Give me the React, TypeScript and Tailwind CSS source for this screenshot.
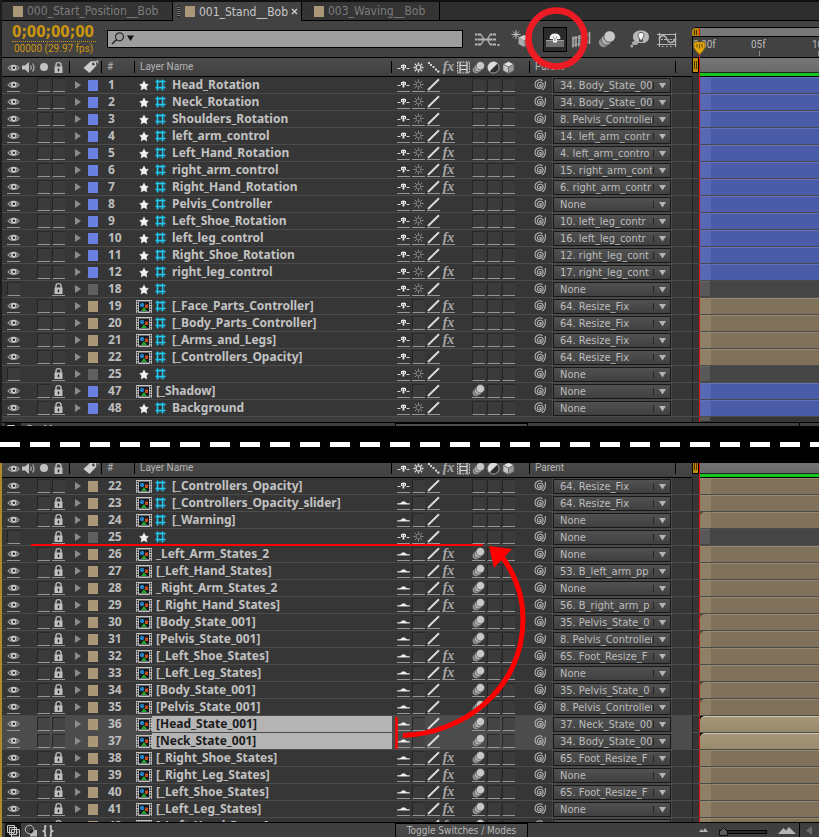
import { ReactNode } from 'react'
import clsx from 'clsx'

type Layer = {
  id: number
  name: string
  color: 'blue' | 'tan' | 'gray'
  comp?: boolean
  guide?: boolean
  hidden?: boolean
  locked?: boolean
  shy?: boolean
  fx?: boolean
  blur?: boolean
  selected?: boolean
  trimmed?: boolean
  parent: string
}

const blue = { color: 'blue' as const, guide: true }
const ctrl = { color: 'tan' as const, comp: true, guide: true }
const state = { color: 'tan' as const, comp: true, locked: true, shy: true, blur: true }

const topLayers: Layer[] = [
  { ...blue, id: 1, name: 'Head_Rotation', parent: '34. Body_State_001' },
  { ...blue, id: 2, name: 'Neck_Rotation', parent: '34. Body_State_001' },
  { ...blue, id: 3, name: 'Shoulders_Rotation', parent: '8. Pelvis_Controller' },
  { ...blue, id: 4, name: 'left_arm_control', fx: true, parent: '14. left_arm_contr' },
  { ...blue, id: 5, name: 'Left_Hand_Rotation', fx: true, parent: '4. left_arm_contro' },
  { ...blue, id: 6, name: 'right_arm_control', fx: true, parent: '15. right_arm_cont' },
  { ...blue, id: 7, name: 'Right_Hand_Rotation', fx: true, parent: '6. right_arm_contr' },
  { ...blue, id: 8, name: 'Pelvis_Controller', parent: 'None' },
  { ...blue, id: 9, name: 'Left_Shoe_Rotation', parent: '10. left_leg_contr' },
  { ...blue, id: 10, name: 'left_leg_control', fx: true, parent: '16. left_leg_contr' },
  { ...blue, id: 11, name: 'Right_Shoe_Rotation', parent: '12. right_leg_cont' },
  { ...blue, id: 12, name: 'right_leg_control', fx: true, parent: '17. right_leg_cont' },
  { id: 18, name: '', color: 'gray', guide: true, hidden: true, locked: true, parent: 'None' },
  { ...ctrl, id: 19, name: '[_Face_Parts_Controller]', fx: true, parent: '64. Resize_Fix' },
  { ...ctrl, id: 20, name: '[_Body_Parts_Controller]', fx: true, parent: '64. Resize_Fix' },
  { ...ctrl, id: 21, name: '[_Arms_and_Legs]', fx: true, parent: '64. Resize_Fix' },
  { ...ctrl, id: 22, name: '[_Controllers_Opacity]', parent: '64. Resize_Fix' },
  { id: 25, name: '', color: 'gray', guide: true, hidden: true, locked: true, parent: 'None' },
  { id: 47, name: '[_Shadow]', color: 'blue', comp: true, locked: true, blur: true, parent: 'None' },
  { ...blue, id: 48, name: 'Background', locked: true, parent: 'None' },
]

const bottomLayers: Layer[] = [
  { ...ctrl, id: 22, name: '[_Controllers_Opacity]', parent: '64. Resize_Fix' },
  { ...ctrl, id: 23, name: '[_Controllers_Opacity_slider]', locked: true, shy: true, parent: '64. Resize_Fix' },
  { ...ctrl, id: 24, name: '[_Warning]', locked: true, shy: true, trimmed: true, parent: 'None' },
  { id: 25, name: '', color: 'gray', guide: true, hidden: true, locked: true, parent: 'None' },
  { ...state, id: 26, name: '_Left_Arm_States_2', fx: true, parent: 'None' },
  { ...state, id: 27, name: '[_Left_Hand_States]', fx: true, parent: '53. B_left_arm_pp' },
  { ...state, id: 28, name: '_Right_Arm_States_2', fx: true, parent: 'None' },
  { ...state, id: 29, name: '[_Right_Hand_States]', fx: true, parent: '56. B_right_arm_p' },
  { ...state, id: 30, name: '[Body_State_001]', trimmed: true, parent: '35. Pelvis_State_0' },
  { ...state, id: 31, name: '[Pelvis_State_001]', trimmed: true, parent: '8. Pelvis_Controller' },
  { ...state, id: 32, name: '[_Left_Shoe_States]', fx: true, parent: '65. Foot_Resize_F' },
  { ...state, id: 33, name: '[_Left_Leg_States]', fx: true, parent: 'None' },
  { ...state, id: 34, name: '[Body_State_001]', trimmed: true, parent: '35. Pelvis_State_0' },
  { ...state, id: 35, name: '[Pelvis_State_001]', trimmed: true, parent: '8. Pelvis_Controller' },
  { ...state, id: 36, name: '[Head_State_001]', locked: false, selected: true, trimmed: true, parent: '37. Neck_State_00' },
  { ...state, id: 37, name: '[Neck_State_001]', locked: false, selected: true, trimmed: true, parent: '34. Body_State_001' },
  { ...state, id: 38, name: '[_Right_Shoe_States]', fx: true, parent: '65. Foot_Resize_F' },
  { ...state, id: 39, name: '[_Right_Leg_States]', fx: true, parent: 'None' },
  { ...state, id: 40, name: '[_Left_Shoe_States]', fx: true, parent: '65. Foot_Resize_F' },
  { ...state, id: 41, name: '[_Left_Leg_States]', fx: true, parent: 'None' },
]

const nextLayer: Layer = { ...state, id: 42, name: '[_Left_Hand_Poses]', fx: true, parent: 'None' }

const swatches = { blue: 'bg-[#6a80e0]', tan: 'bg-[#a99777]', gray: 'bg-[#606060]' }

/* ---------- icons ---------- */

const Eye = () => (
  <svg width="13" height="13" viewBox="0 0 13 13">
    <path d="M0.8 7C3 3.4 10 3.2 12.3 7C10 10.2 3 10.2 0.8 7Z" fill="#5c5c5c" stroke="#bcbcbc" strokeWidth="0.9" />
    <circle cx="6.7" cy="6.6" r="2.7" fill="#d6d6d6" />
    <circle cx="6.9" cy="6.8" r="1.3" fill="#2a2a2a" />
  </svg>
)

const Speaker = () => (
  <svg width="14" height="13" viewBox="0 0 14 13">
    <path d="M0 4.5H3L7 1V12L3 8.5H0Z" fill="#c2c2c2" />
    <path d="M8.5 4.5Q10 6.5 8.5 8.5M10.5 2.5Q13.5 6.5 10.5 10.5" fill="none" stroke="#b4b4b4" strokeWidth="1.2" />
  </svg>
)

const Lock = () => (
  <svg width="13" height="13" viewBox="0 0 13 13">
    <path d="M4 6V3.8C4 0.9 9 0.9 9 3.8V6" fill="none" stroke="#c0c0c0" strokeWidth="1.4" />
    <rect x="2.5" y="5.5" width="8" height="6.5" fill="#c0c0c0" />
    <path d="M6.5 7.5V10.3" stroke="#222" strokeWidth="1.4" />
  </svg>
)

const Tag = () => (
  <svg width="16" height="14" viewBox="0 0 16 14">
    <path d="M0.5 8L7.5 1.5L12.5 1L13.5 5.5L6.5 13Z" fill="#cdcdcd" />
    <circle cx="10.5" cy="4" r="1.4" fill="#333" />
    <path d="M10.8 3.8L14.8 0.5V3.5" fill="none" stroke="#cdcdcd" />
  </svg>
)

const Star = () => (
  <svg width="16" height="13" viewBox="0 0 16 13">
    <path d="M8 0.8L9.9 4.6L13.4 5L10.9 7.8L11.6 12L8 10L4.4 12L5.1 7.8L2.6 5L6.1 4.6Z" fill="#f2f2f2" stroke="#1d1d1d" strokeWidth="0.6" />
  </svg>
)

const CompIcon = () => (
  <svg width="16" height="13" viewBox="0 0 16 13">
    <rect width="16" height="13" fill="#c4c4c4" />
    <rect x="3" y="1.5" width="10" height="10" fill="#141820" />
    <path d="M1.5 1V13M14.5 1V13" stroke="#1c1c1c" strokeWidth="1.4" strokeDasharray="1.4 1.2" />
    <circle cx="6" cy="5" r="2.2" fill="#2384c4" />
    <rect x="9" y="4.5" width="3" height="3.5" fill="#d04a18" />
    <path d="M5 11L8 7L11 11Z" fill="#22a52c" />
  </svg>
)

const GuideIcon = () => (
  <svg width="11" height="12" viewBox="0 0 11 12">
    <rect x="1" y="1" width="9" height="10" fill="#2f5662" />
    <rect x="4" y="4" width="3" height="4" fill="#333" />
    <path d="M2.5 0.5V11.5M7.5 0.5V11.5M0.5 2.5H10.5M0.5 8.500H10.5" stroke="#22c8ee" strokeWidth="1.3" />
  </svg>
)

const ShyUp = () => (
  <svg width="13" height="13" viewBox="0 0 13 13">
    <path d="M0.5 7.5H3.5M9.5 7.5H12.5" stroke="#dadada" strokeWidth="1.2" />
    <path d="M4 4.3Q6.5 2.8 9 4.3V7H7.4V9.5H5.6V7H4Z" fill="#ececec" />
    <path d="M5.5 5.3V6.3M7.5 5.3V6.3" stroke="#222" strokeWidth="0.9" />
  </svg>
)

const ShyDown = () => (
  <svg width="13" height="13" viewBox="0 0 13 13">
    <path d="M0.5 7.5H12.5V8.2H0.5ZM3.2 7.5Q6.5 3.6 9.8 7.5Z" fill="#f0f0f0" stroke="#f0f0f0" strokeWidth="0.4" />
  </svg>
)

const Sun = ({ bright }: { bright?: boolean }) => (
  <svg width="13" height="13" viewBox="0 0 13 13" fill="none" stroke={bright ? '#dcdcdc' : '#8e8e8e'} strokeWidth={bright ? 1.3 : 1}>
    <rect x="4.2" y="4.2" width="4.6" height="4.6" rx="1.5" />
    <path d="M6.5 1.5V3.5M6.5 9.5V11.5M1.5 6.5H3.5M9.5 6.5H11.5M2.8 2.8L4 4M9 9L10.2 10.2M10.2 2.8L9 4M4 9L2.8 10.2" />
  </svg>
)

const Slash = () => (
  <svg width="13" height="13" viewBox="0 0 13 13">
    <path d="M1 12L12 1.2" stroke="#dcdcdc" strokeWidth="1.9" />
  </svg>
)

const Steps = () => (
  <svg width="13" height="13" viewBox="0 0 13 13" fill="#d4d4d4">
    <path d="M1 1H3V3H1ZM3 3H5V5H3ZM5.500 5H7.500V7H5.500ZM8 7.500H10V9.500H8ZM10 9.500H12.500V11.500H10Z" />
  </svg>
)

const Fx = () => <span className="font-['Liberation_Serif',serif] text-[14px] leading-[12px] font-bold text-[#a8a8a8] italic">fx</span>

const Film = () => (
  <svg width="13" height="13" viewBox="0 0 13 13">
    <path d="M0.5 1H12.5V12H0.5Z" fill="#555" stroke="#d0d0d0" strokeDasharray="1.6 1" />
    <path d="M3 1V12M10 1V12M3 4.5H10M3 8.5H10" stroke="#d8d8d8" strokeWidth="1.2" />
  </svg>
)

const Blur = ({ size = 13 }: { size?: number }) => (
  <svg width={size} height={size} viewBox="0 0 13 13" stroke="#3d3d3d" strokeWidth="0.6">
    <circle cx="4.2" cy="8.8" r="3.8" fill="#9a9a9a" />
    <circle cx="6.2" cy="7" r="4" fill="#aeaeae" />
    <circle cx="8.4" cy="4.7" r="4.2" fill="#c8c8c8" />
  </svg>
)

const Adjust = () => (
  <svg width="13" height="13" viewBox="0 0 13 13">
    <circle cx="6.5" cy="6.5" r="5.6" fill="#2c2c2c" stroke="#a8a8a8" />
    <path d="M2.5 10.500A5.600 5.600 0 0 1 10.500 2.500Z" fill="#dcdcdc" />
  </svg>
)

const Cube = () => (
  <svg width="13" height="13" viewBox="0 0 13 13" stroke="#5a5a5a" strokeWidth="0.6">
    <path d="M6.5 0.5L12 3.2L6.5 6L1 3.2Z" fill="#e2e2e2" />
    <path d="M1 3.2L6.5 6V12.5L1 9.6Z" fill="#c4c4c4" />
    <path d="M12 3.2L6.5 6V12.5L12 9.6Z" fill="#989898" />
  </svg>
)

const Swirl = () => (
  <svg width="13" height="13" viewBox="0 0 13 13" fill="none" stroke="#b2b2b2" strokeWidth="1.100">
    <path d="M5.500 6.500A0.900 0.900 0 0 1 7.300 6.500A2 2 0 0 1 3.400 6.300A2.900 2.900 0 0 1 9.200 6A4.100 4.100 0 0 1 1.100 6.200A4.600 4.600 0 0 1 8.500 1.800" />
    <path d="M11.300 2V6Q11 9.500 8 10.800" />
  </svg>
)

/* ---------- timeline rows ---------- */

function Cell({ label, children, boxed = true }: { label: string; children?: ReactNode; boxed?: boolean }) {
  return (
    <button
      aria-label={label}
      className={clsx(
        'mx-px flex h-[14px] w-[13px] shrink-0 items-center justify-center overflow-hidden',
        boxed && 'border-b border-[#969696]',
        boxed && !children && 'border-t border-l border-t-[#2a2a2a] border-l-[#242424] bg-[#404040]/60'
      )}
    >
      {children}
    </button>
  )
}

function ParentSelect({ layer }: { layer: Layer }) {
  return (
    <div className="relative ml-[5px] h-[15px] w-[118px] shrink-0">
      <select
        aria-label={`Parent of layer ${layer.id}`}
        className="block h-[15px] w-full appearance-none overflow-hidden border border-[#181818] bg-gradient-to-b from-[#515151] to-[#404040] pr-[18px] pl-[6px] text-[11px] leading-[13px] text-[#bdbdbd] outline outline-[#494949]"
      >
        <option>{layer.parent}</option>
      </select>
      <svg className="pointer-events-none absolute top-[3px] right-[4px]" width="14" height="9" viewBox="0 0 14 9">
        <path d="M0.5 1V8" stroke="#242424" />
        <path d="M6 2H13L9.5 7.5Z" fill="#b4b4b4" />
      </svg>
    </div>
  )
}

function Bar({ layer }: { layer: Layer }) {
  if (layer.color === 'gray') {
    return (
      <div className="h-[16px] flex-1 bg-[#464646]">
        <div className="h-[15px] w-[10px] border-t border-[#666] bg-[#585858]" />
      </div>
    )
  }
  if (layer.selected) {
    return (
      <div className="h-[16px] flex-1 bg-black">
        <div className="h-[16px] rounded-tl-[5px] border-t border-[#d2c5ad] bg-gradient-to-b from-[#a5967a] to-[#998a6c]" />
      </div>
    )
  }
  return (
    <div className="h-[16px] flex-1 bg-[#4d473b]">
      <div
        className={clsx(
          'h-[16px] overflow-hidden border-t',
          layer.trimmed && 'rounded-tl-[5px]',
          layer.color === 'blue' ? 'border-[#6572b8] bg-[#4a5ba7]' : 'border-[#998a6e] bg-[#80725a]'
        )}
      >
        <div className={clsx('h-full w-[11px]', layer.color === 'blue' ? 'bg-[#5768b4]' : 'bg-[#8f7f66]')} />
      </div>
    </div>
  )
}

/* strip between the layer columns and the track, ends in the playhead line */
const Gutter = () => <div className="w-[8px] shrink-0 self-stretch border-r border-l border-r-[#e01010] border-l-[#202020] bg-[#363636]" />

function LayerRow({ layer }: { layer: Layer }) {
  return (
    <div className="flex h-[17px] items-start border-b border-[#4b4b4b]">
      <div className={clsx('flex h-[16px] w-[690px] shrink-0 items-center pl-1', layer.selected ? 'bg-[#4c4c4c]' : 'bg-[#363636]')}>
        <Cell label="Video">{!layer.hidden && <Eye />}</Cell>
        <div className="w-[15px]" />
        {layer.hidden ? <div className="w-[15px]" /> : <Cell label="Solo" />}
        <Cell label="Lock">{layer.locked && <Lock />}</Cell>
        <button aria-label="Expand layer" className="flex h-[14px] w-[20px] items-center pl-[9px]">
          <svg width="6" height="8" viewBox="0 0 6 8">
            <path d="M0 0L6 4L0 8Z" fill="#8c8c8c" />
          </svg>
        </button>
        <div className={clsx('ml-[2px] h-[11px] w-[10px]', swatches[layer.color])} />
        <div className="w-[36px] pl-[10px] font-['Noto_Sans',sans-serif] text-[12px] font-bold text-[#bebebe]">{layer.id}</div>
        <div className="flex w-[258px] items-center self-stretch pl-[2px]">
          {layer.comp ? <CompIcon /> : <Star />}
          {layer.guide && (
            <div className="ml-[3px] w-[13px]">
              <GuideIcon />
            </div>
          )}
          <div
            className={clsx(
              "flex-1 self-stretch pl-[4px] font-['Noto_Sans',sans-serif] text-[12px] leading-[16px] font-bold whitespace-nowrap",
              layer.selected ? 'bg-[#b4b4b4] text-[#1c1c1c]' : 'text-[#c2c2c2]'
            )}
          >
            {layer.name}
          </div>
        </div>
        <div className="ml-1 flex w-[120px]">
          <Cell label="Shy">{layer.shy ? <ShyDown /> : <ShyUp />}</Cell>
          <Cell label="Collapse transformations">{!layer.comp && <Sun />}</Cell>
          <Cell label="Quality">
            <Slash />
          </Cell>
          {layer.fx ? (
            <Cell label="Effects">
              <Fx />
            </Cell>
          ) : (
            <div className="w-[15px]" />
          )}
          <div className="w-[15px]" />
          <Cell label="Motion blur">{layer.blur && <Blur />}</Cell>
          <Cell label="Adjustment layer" />
          <Cell label="3D layer" />
        </div>
        <button aria-label="Pick parent" className="ml-[18px] w-[14px]">
          <Swirl />
        </button>
        <ParentSelect layer={layer} />
      </div>
      <Gutter />
      <Bar layer={layer} />
    </div>
  )
}

const headIcon = 'flex w-[15px] shrink-0 items-center justify-center'

function ColumnHeader() {
  return (
    <div className="flex h-[20px] shrink-0">
      <div className="flex w-[690px] shrink-0 items-center border-t border-b border-black bg-gradient-to-b from-[#4c4c4c] to-[#404040] pl-1 font-['Roboto',sans-serif] text-[10px] text-[#b4b4b4]">
        <div className={headIcon}><Eye /></div>
        <div className={headIcon}><Speaker /></div>
        <div className={headIcon}><span className="h-[8px] w-[8px] rounded-full bg-[#c0c0c0]" /></div>
        <div className={headIcon}><Lock /></div>
        <div className="ml-[3px] flex h-[12px] w-[32px] items-center border-l border-black pl-[13px]"><Tag /></div>
        <div className="h-[12px] w-[33px] border-l border-black pl-[5px] leading-[12px]">#</div>
        <div className="h-[12px] w-[258px] border-r border-l border-black pl-[5px] leading-[12px]">Layer Name</div>
        <div className="ml-1 flex w-[120px]">
          <div className={headIcon}><ShyUp /></div>
          <div className={headIcon}><Sun bright /></div>
          <div className={headIcon}><Steps /></div>
          <div className={headIcon}><Fx /></div>
          <div className={headIcon}><Film /></div>
          <div className={headIcon}><Blur /></div>
          <div className={headIcon}><Adjust /></div>
          <div className={headIcon}><Cube /></div>
        </div>
        <div className="ml-[13px] h-[12px] w-[147px] border-r border-l border-black pl-[5px] leading-[12px]">Parent</div>
      </div>
      <div className="flex w-[8px] shrink-0 border-r border-r-[#e01010] bg-[#363636]">
        <div className="h-[16px] w-[7px] border border-black bg-[#c08c0c] px-px py-[3px]">
          <div className="h-[8px] w-[3px] border-r border-l border-[#4a3600]" />
        </div>
      </div>
      <div className="flex flex-1 flex-col border-t border-b border-black">
        <div className="h-[14px] bg-gradient-to-b from-[#777] to-[#6a6a6a]" />
        <div className="h-px bg-[#222]" />
        <div className="flex-1 bg-[#12c81e]" />
      </div>
    </div>
  )
}

function Footer() {
  return (
    <div className="flex h-[16px] shrink-0 items-start border-t border-black bg-[#3f3f3f]">
      <div className="flex w-[393px] shrink-0 items-center pl-[3px]">
        <button aria-label="Layer switches pane" className="h-[15px] w-[16px] bg-[#161616]">
          <svg width="16" height="15" viewBox="0 0 16 15" fill="#2a2a2a" stroke="#c8c8c8">
            <path d="M2.5 2.5H9.5V9.5H2.5Z M4.5 4.5H11.5V11.5H4.5Z M6.5 6.5H14.5V14H6.5Z" />
            <path d="M8.5 10L10.2 12L13 8.5" fill="none" />
          </svg>
        </button>
        <button aria-label="Transfer controls pane" className="ml-[3px]">
          <svg width="14" height="14" viewBox="0 0 14 14">
            <circle cx="5.5" cy="5.5" r="4.2" fill="none" stroke="#bcbcbc" />
            <rect x="6" y="6" width="7" height="6.5" fill="#b8b8b8" />
            <path d="M6 9.7A4.2 4.2 0 0 0 9.7 6H6Z" fill="#222" />
          </svg>
        </button>
        <button aria-label="In and out pane" className="ml-[4px]">
          <svg width="12" height="14" viewBox="0 0 12 14" fill="none" stroke="#c8c8c8" strokeWidth="1.7">
            <path d="M4.5 2H3V6L1.5 7L3 8V12H4.5M7.5 2H9V6L10.5 7L9 8V12H7.5" />
          </svg>
        </button>
      </div>
      <button className="h-[16px] w-[133px] shrink-0 border border-black bg-gradient-to-b from-[#4c4c4c] to-[#424242] text-[10px] leading-[14px] text-[#b8b8b8]">
        Toggle Switches / Modes
      </button>
      <div className="flex h-[15px] flex-1 items-center justify-end">
        <svg width="9" height="7" viewBox="0 0 9 7">
          <path d="M0 5L2.5 2L4 4L6 1L9 5Z" fill="#b4b4b4" />
        </svg>
        <div className="relative mx-[11px] h-[14px] w-[48px]">
          <div className="absolute top-[6px] h-[4px] w-full border border-black bg-[#2a2a2a]" />
          <svg className="absolute top-[3px] left-0" width="9" height="9" viewBox="0 0 9 9">
            <path d="M4.5 0.5L8.5 4.5V8.5H0.5V4.5Z" fill="#5a5a5a" stroke="#0c0c0c" />
          </svg>
          <input type="range" aria-label="Timeline zoom" min="0" max="100" defaultValue="0" className="absolute inset-0 w-full opacity-0" />
        </div>
        <svg width="18" height="10" viewBox="0 0 18 10">
          <path d="M0 8L5.5 2L8 4.5L11 1L18 8Z" fill="#b4b4b4" />
        </svg>
        <button aria-label="Scroll left" className="ml-[3px] flex h-[15px] w-[20px] items-center border-l border-black pl-[6px]">
          <svg width="6" height="9" viewBox="0 0 6 9">
            <path d="M6 0V9L0 4.5Z" fill="#6b6b6b" />
          </svg>
        </button>
      </div>
    </div>
  )
}

/* ---------- top of the panel ---------- */

function Tabs() {
  return (
    <nav className="flex h-[21px] border-t-[2px] border-[#101010] bg-[#2e2e2e] text-[12px] text-[#7c7c7c]">
      <button className="flex w-[171px] items-center border-r border-b border-black bg-[#343434] pl-[11px]">
        <span className="mr-[4px] h-[11px] w-[10px] bg-[#a99777]" />
        000_Start_Position__Bob
      </button>
      <button className="flex w-[129px] items-center border-r border-black bg-[#424242] pl-[4px] text-[#c8c8c8]">
        <span className="mr-[5px] h-[11px] w-[3px] bg-[repeating-linear-gradient(#222_0_1px,#777_1px_2px)]" />
        <span className="mr-[4px] h-[11px] w-[10px] bg-[#a99777]" />
        001_Stand__Bob
        <svg className="ml-auto mr-[3px]" width="7" height="7" viewBox="0 0 7 7">
          <path d="M1 1L6 6M6 1L1 6" stroke="#d0d0d0" strokeWidth="1.3" />
        </svg>
      </button>
      <button className="flex w-[138px] items-center border-r border-b border-black bg-[#343434] pl-[12px]">
        <span className="mr-[4px] h-[11px] w-[10px] bg-[#a99777]" />
        003_Waving__Bob
      </button>
      <div className="flex-1 border-b border-black" />
    </nav>
  )
}

function Toolbar() {
  return (
    <div className="flex h-[36px] bg-[#424242]">
      <div className="flex w-[690px] shrink-0 items-start">
        <div className="w-[105px] shrink-0 pt-[3px] pl-[10px] text-[#c9950f]">
          <div className="w-[84px] border-b border-dotted border-[#c9950f] text-[15px] leading-[17px] font-bold">0;00;00;00</div>
          <div className="pl-[2px] font-['Roboto',sans-serif] text-[10px] leading-[14px] whitespace-nowrap">00000 (29.97 fps)</div>
        </div>
        <div className="relative mt-[9px] w-[356px] shrink-0">
          <input type="text" aria-label="Search layers" className="block h-[18px] w-full border border-black bg-[#9e9e9e] pl-[30px] text-[11px] outline-none" />
          <svg className="pointer-events-none absolute top-[2px] left-[4px]" width="24" height="13" viewBox="0 0 24 13">
            <circle cx="8.5" cy="4.8" r="4" fill="none" stroke="#2c2c2c" strokeWidth="1.2" />
            <path d="M5.6 7.7L1 12" stroke="#2c2c2c" strokeWidth="1.6" />
            <path d="M16 3.5H23L19.5 9Z" fill="#111" />
          </svg>
        </div>
        <button aria-label="Mini-flowchart" className="mt-[12px] ml-[12px]">
          <svg width="25" height="13" viewBox="0 0 25 13" fill="none" stroke="#b4b4b4" strokeWidth="1.3">
            <path d="M0 1.5H6M0 6.5H6M0 11.5H6M15 1.5H21M15 6.5H21M15 11.5H21" strokeWidth="2.2" strokeDasharray="2 0.500 4 0" />
            <path d="M6 1.5L9 6.5L6 11.5M15 1.5L12.5 6.5L15 11.5" />
            <path d="M6 6.500H16" strokeWidth="2" />
            <path d="M22.500 12H24.500" strokeWidth="2" />
          </svg>
        </button>
        <button aria-label="Draft 3D" className="mt-[9px] ml-[11px]">
          <svg width="19" height="18" viewBox="0 0 19 18">
            <path d="M5 0V9M0.5 4.5H9.5M2 1.5L8 7.5M8 1.5L2 7.5" stroke="#bdbdbd" />
            <path d="M13 5L18.5 7.5L13 10.5L7.5 7.5Z" fill="#ccc" />
            <path d="M7.5 7.5L13 10.5V17L7.5 14Z" fill="#aaa" />
            <path d="M18.5 7.5L13 10.5V17L18.5 14Z" fill="#848484" />
          </svg>
        </button>
        <button aria-label="Hide shy layers" className="mt-[6px] ml-[13px] flex h-[25px] w-[24px] justify-center border border-black bg-[#2b2b2b]">
          <svg width="20" height="23" viewBox="0 0 20 23">
            <rect x="1" y="12" width="18" height="7" fill="#6e6e6e" />
            <path d="M1 12.5H19" stroke="#a0a0a0" />
            <path d="M4.500 10.500Q5 5.500 10 5.500Q15 5.500 15.500 10.500Q14 11.500 12 11V14.500H8V11Q6 11.500 4.500 10.500Z" fill="#f4f4f4" />
            <path d="M8.500 8.500V10M11.500 8.500V10" stroke="#777" />
            <path d="M10 10V13" stroke="#777" />
          </svg>
        </button>
        <button aria-label="Frame blending" className="mt-[11px] ml-[5px]">
          <svg width="19" height="16" viewBox="0 0 19 16" fill="none" stroke="#aeaeae">
            <path d="M1 4.500V15.500M4 4V15M7 3V14.500M10 2.500V14M13 1.500V13M17.500 0V12" strokeWidth="1.500" />
            <path d="M2.500 5V15M8.500 3.500V14M15 1V12.500" strokeDasharray="1 1.500" />
            <path d="M0 7L18 2.500M0 13.500L18 9.500" strokeWidth="0.800" />
          </svg>
        </button>
        <button aria-label="Motion blur" className="mt-[9px] ml-[7px]">
          <Blur size={18} />
        </button>
        <button aria-label="Brainstorm" className="mt-[9px] ml-[14px]">
          <svg width="20" height="18" viewBox="0 0 20 18">
            <path d="M3 7C3 2 7 0.5 11 0.5C16 0.5 19 3 19 7C19 11 15.5 13.5 11 13C7 13.5 3 11 3 7Z" fill="#b8b8b8" />
            <path d="M11 2.500C14.500 2.500 14.500 6 13 7.500C12.500 8.500 12.500 9 12.500 11.500H9.500C9.500 9 9.500 8.500 9 7.500C7.500 6 7.500 2.500 11 2.500Z" fill="#f4f4f4" stroke="#555" />
            <path d="M9.500 9.500H12.500V12H9.500Z" fill="#555" />
            <ellipse cx="5" cy="13" rx="3" ry="2" fill="#aaa" />
            <circle cx="1.8" cy="16" r="1.5" fill="#aaa" />
          </svg>
        </button>
        <button aria-label="Graph editor" className="mt-[12px] ml-[7px]">
          <svg width="20" height="14" viewBox="0 0 20 14" fill="none" stroke="#b4b4b4">
            <path d="M0 1.5H19M0 11.5H19M2.5 0V14M18.5 0V14" strokeWidth="1.2" />
            <path d="M2 6.5C5 0.5 8 2 10 6.5C12 10.5 15 11 19 6" strokeWidth="1.4" />
            <path d="M5 13.5H6.5M9 13.5H10.5M13 13.5H14.5M4 6.5H18" strokeDasharray="2 1" />
          </svg>
        </button>
      </div>
      <Ruler />
    </div>
  )
}

function Ruler() {
  return (
    <div className="relative flex flex-1 flex-col overflow-hidden pt-[6px] font-['Roboto',sans-serif] text-[10px] text-[#b8b8b8]">
      <div className="flex h-[10px] rounded-tl-[5px] border-t border-b border-black bg-[#777]">
        <div className="flex w-[8px] items-center justify-center rounded-tl-[4px] border-r border-[#e01010] bg-[#b8860e]">
          <div className="h-[5px] w-[3px] border-r border-l border-[#4a3600]" />
        </div>
      </div>
      <div className="relative flex-1 border-l border-black">
        <span className="absolute top-[2px] left-0 leading-[12px]">0:00f</span>
        <span className="absolute top-[2px] left-[58px] leading-[12px]">05f</span>
        <span className="absolute top-[2px] left-[119px] leading-[12px]">10f</span>
        <div className="absolute bottom-[1px] left-[66px] h-[5px] w-px bg-[#8a8a8a]" />
        <div className="absolute bottom-[1px] left-[125px] h-[5px] w-px bg-[#8a8a8a]" />
        <svg className="absolute top-[4px] left-0" width="13" height="16" viewBox="0 0 13 16">
          <path d="M6.5 13V16" stroke="#e01010" />
          <path d="M1 1H12V6.5Q11 9.5 6.5 13.5Q2 9.5 1 6.5Z" fill="#e0a40e" stroke="#8a6204" strokeWidth="0.7" />
          <path d="M4 3V6.5M6.5 3V7.5M9 3V6.5" stroke="#6a4a00" />
        </svg>
      </div>
    </div>
  )
}

export default function App() {
  return (
    <main className="relative min-w-[819px] overflow-hidden bg-black font-['DejaVu_Sans_Condensed','DejaVu_Sans',sans-serif] text-[11px] leading-[14px]">
      <section className="border-l-[2px] border-[#1c1c1c] bg-[#363636]">
        <Tabs />
        <Toolbar />
        <ColumnHeader />
        {topLayers.map((layer) => (
          <LayerRow key={layer.id} layer={layer} />
        ))}
        <div className="flex h-[5px]">
          <div className="w-[690px] bg-[#3d3d3d]" />
          <Gutter />
          <div className="h-[4px] w-[10px] bg-[#585858]" />
        </div>
        <div className="h-[4px] overflow-hidden">
          <Footer />
        </div>
      </section>

      <div className="flex h-[37px] items-center bg-black">
        <div className="h-[5px] flex-1 bg-[repeating-linear-gradient(90deg,#fff_0_20px,#000_20px_30px)]" />
      </div>

      <section className="relative border-l-[2px] border-[#b08a28] bg-[#363636]">
        <div className="flex h-[15px] flex-col justify-end overflow-hidden">
          <ColumnHeader />
        </div>
        {bottomLayers.map((layer) => (
          <LayerRow key={layer.id} layer={layer} />
        ))}
        <div className="h-[4px] overflow-hidden">
          <LayerRow layer={nextLayer} />
        </div>
        <Footer />
        {/* drag path of the selected layers */}
        <svg className="pointer-events-none absolute top-[80px] left-[29px]" width="510" height="210" viewBox="0 0 510 210" fill="none" stroke="#f00">
          <path d="M0 2H452" strokeWidth="2" />
          <path d="M365.500 174V206" strokeWidth="2.500" />
          <path d="M372 192.500C430 191 492 148 492 76C492 52 484 32 472 15" strokeWidth="5" />
          <path d="M458 3L481 6L463 25Z" fill="#f00" stroke="none" />
        </svg>
      </section>

      <svg className="pointer-events-none absolute top-[6px] left-[524px]" width="66" height="66" viewBox="0 0 66 66">
        <circle cx="32.500" cy="32.500" r="28" fill="none" stroke="#ed1c24" strokeWidth="6.500" />
      </svg>
    </main>
  )
}
